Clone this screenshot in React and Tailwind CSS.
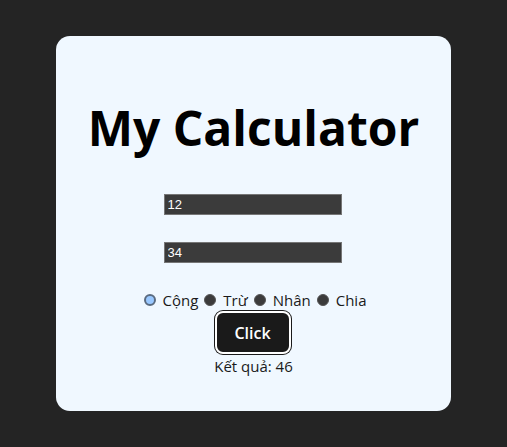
import React, { useState } from "react";

const ops = [
  { key: "add", label: "Cộng" },
  { key: "sub", label: "Trừ" },
  { key: "mul", label: "Nhân" },
  { key: "div", label: "Chia" },
];

function Radio({ checked }) {
  return checked ? (
    <span className="w-[12px] h-[12px] rounded-full border-[2px] border-[#5a6b80] bg-[#99c8ff] shrink-0" />
  ) : (
    <span className="w-[12px] h-[12px] rounded-full bg-[#3b3b3b] border border-[#555] shrink-0" />
  );
}

export default function App() {
  const [a, setA] = useState("12");
  const [b, setB] = useState("34");
  const [op, setOp] = useState("add");

  return (
    <div className="min-h-[447px] bg-[#242424] flex items-center justify-center font-['Open_Sans',sans-serif]">
      <div className="w-[395px] h-[375px] bg-[#f0f8ff] rounded-[14px] flex flex-col items-center pt-[63px]">
        <h1 className="text-[48px] font-bold leading-[58px] text-black font-['Open_Sans',sans-serif]">
          My Calculator
        </h1>
        <input
          value={a}
          onChange={(e) => setA(e.target.value)}
          className="mt-[37px] mr-[2px] w-[178px] h-[21px] bg-[#3b3b3b] border border-[#767676] text-white text-[13px] px-[3px] font-['Liberation_Sans',sans-serif] outline-none"
        />
        <input
          value={b}
          onChange={(e) => setB(e.target.value)}
          className="mt-[27px] mr-[2px] w-[178px] h-[21px] bg-[#3b3b3b] border border-[#767676] text-white text-[13px] px-[3px] font-['Liberation_Sans',sans-serif] outline-none"
        />
        <div className="mt-[27px] ml-[3px] flex items-center text-[15px] text-[#1a1a1a] leading-[20px]">
          {ops.map((o, i) => (
            <label
              key={o.key}
              onClick={() => setOp(o.key)}
              className={`flex items-center gap-[7px] cursor-pointer ${i > 0 ? "ml-[6px]" : ""}`}
            >
              <Radio checked={op === o.key} />
              <span>{o.label}</span>
            </label>
          ))}
        </div>
        <button className="mt-[1px] mr-[2px] w-[76px] h-[43px] rounded-[8px] bg-[#1a1a1a] text-white text-[16px] font-semibold border-[2px] border-white ring-1 ring-[#1a1a1a]">
          Click
        </button>
        <p className="mt-[2px] text-[15px] leading-[20px] text-[#1a1a1a]">Kết quả: 46</p>
      </div>
    </div>
  );
}
